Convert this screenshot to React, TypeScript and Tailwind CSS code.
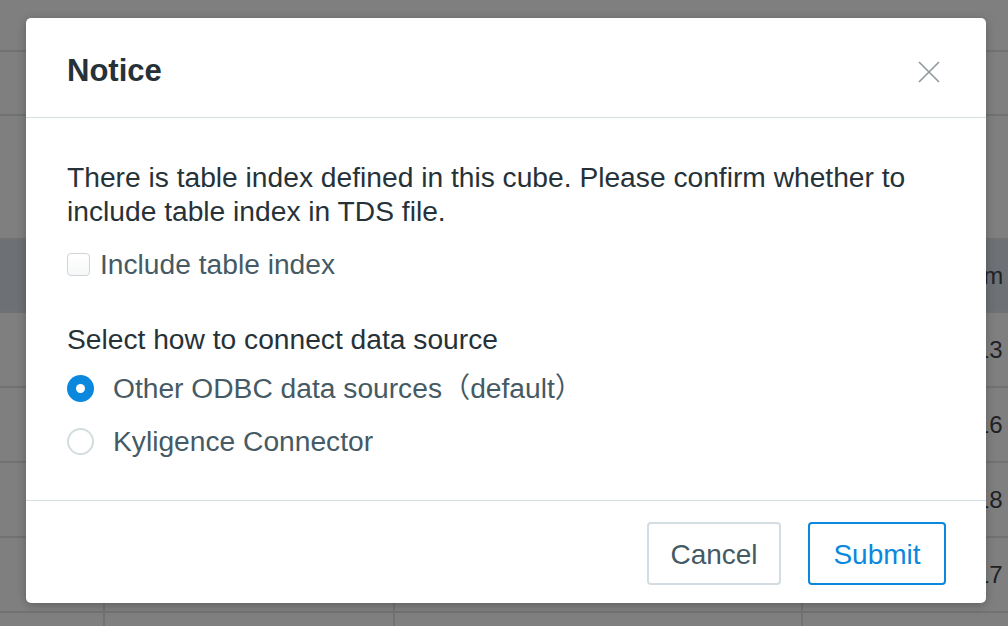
const font = "font-['Liberation_Sans','Noto_Sans_CJK_SC',Arial,sans-serif]";

const rows = ["13", "16", "18", "17"];

function BackgroundTable() {
  return (
    <div className="flex flex-col">
      <div className="h-[52px] border-b-2 border-[#707274]" />
      <div className="h-[64px] border-b-2 border-[#707274]" />
      <div className="h-[124px] border-b-2 border-[#707274]" />
      <div className="grid h-[73px] grid-cols-[105px_290px_408px_1fr] border-b-2 border-[#707274] bg-[#6d7175]">
        <div />
        <div />
        <div />
        <div className="flex items-center pl-[151px] text-[24px] text-[#1e2225]">Sum</div>
      </div>
      {rows.map((n) => (
        <div
          key={n}
          className="grid h-[75px] grid-cols-[105px_290px_408px_1fr] border-b-2 border-[#707274]"
        >
          <div className="border-r-2 border-[#707274]" />
          <div className="border-r-2 border-[#707274]" />
          <div className="border-r-2 border-[#707274]" />
          <div className="flex items-center pl-[173px] text-[24px] text-[#1e2225]">{n}</div>
        </div>
      ))}
      <div className="grid h-[40px] grid-cols-[105px_290px_408px_1fr]">
        <div className="border-r-2 border-[#707274]" />
        <div className="border-r-2 border-[#707274]" />
        <div className="border-r-2 border-[#707274]" />
        <div />
      </div>
    </div>
  );
}

function CloseIcon() {
  return (
    <svg width="22" height="22" viewBox="0 0 22 22" fill="none" stroke="currentColor" strokeWidth="1.6">
      <path d="M1 1 L21 21 M21 1 L1 21" />
    </svg>
  );
}

function Radio({ checked, label }: { checked?: boolean; label: string }) {
  return (
    <label className="flex h-[31px] items-center gap-[19px]">
      {checked ? (
        <span className="flex h-[27px] w-[27px] items-center justify-center rounded-full bg-[#0a88de]">
          <span className="h-[9px] w-[9px] rounded-full bg-white" />
        </span>
      ) : (
        <span className="h-[27px] w-[27px] rounded-full border-2 border-[#d3dde0] bg-white" />
      )}
      <span className="text-[#455a64]">{label}</span>
    </label>
  );
}

export default function App() {
  return (
    <div className={`relative h-[626px] w-[1008px] overflow-hidden bg-[#7f7f7f] ${font}`}>
      <BackgroundTable />

      <div className="absolute left-[26px] top-[18px] w-[960px] rounded-[5px] bg-white shadow-[0_2px_10px_rgba(0,0,0,0.25)]">
        <div className="flex h-[100px] items-center justify-between border-b border-[#d3dfe1] px-[41px] pt-[6px]">
          <h1 className="text-[31px] font-bold leading-[36px] text-[#263238]">Notice</h1>
          <button className="mr-[5px] mt-[2px] text-[#8e979c]">
            <CloseIcon />
          </button>
        </div>

        <div className="px-[41px] pb-[43px] pt-[42px] text-[28.2px] leading-[31px]">
          <p className="leading-[34px] text-[#263238]">
            There is table index defined in this cube. Please confirm whether to include table
            index in TDS file.
          </p>
          <label className="mt-[21px] flex h-[31px] items-center gap-[10px]">
            <span className="h-[23px] w-[23px] rounded-[4px] border border-[#cdd5d9] bg-gradient-to-b from-white to-[#f6f7f8]" />
            <span className="text-[#455a64]">Include table index</span>
          </label>

          <p className="mt-[44px] text-[#263238]">Select how to connect data source</p>
          <div className="mt-[18px] flex flex-col gap-[22px]">
            <Radio checked label="Other ODBC data sources（default）" />
            <Radio label="Kyligence Connector" />
          </div>
        </div>

        <div className="flex justify-end gap-[27px] border-t border-[#d3dfe1] pb-[18px] pl-[41px] pr-[40px] pt-[21px] text-[28px]">
          <button className="h-[63px] w-[134px] rounded-[4px] border-2 border-[#d3dce0] pt-[3px] text-[#455a64]">
            Cancel
          </button>
          <button className="h-[63px] w-[138px] rounded-[4px] border-2 border-[#0a88de] pt-[3px] text-[#0a88de]">
            Submit
          </button>
        </div>
      </div>
    </div>
  );
}
